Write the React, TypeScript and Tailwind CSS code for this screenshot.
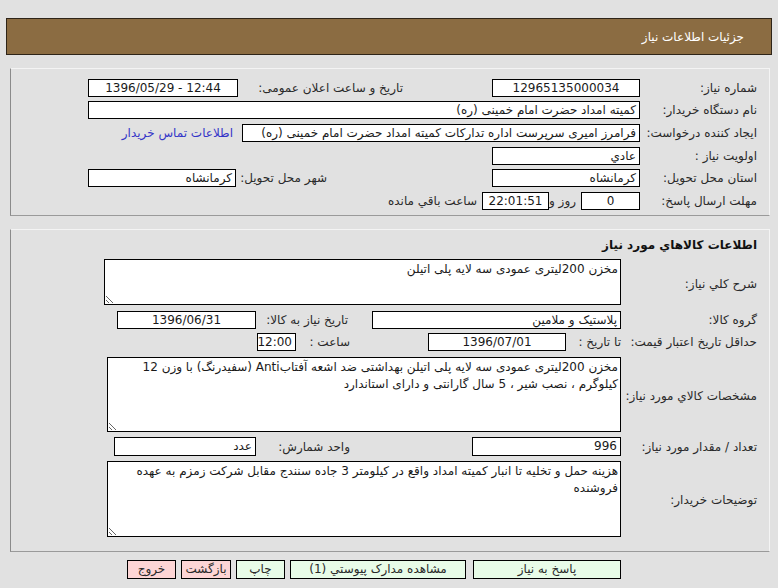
import React from "react";

type BoxProps = {
  w: string;
  center?: boolean;
  ltr?: boolean;
  children?: React.ReactNode;
};

// single-line read-only field, black frame on white
function Box({ w, center, ltr, children }: BoxProps) {
  return (
    <div
      dir={ltr ? "ltr" : undefined}
      className={`${w} h-full shrink-0 border border-black bg-white px-[3px] leading-[16px] text-[#1a1a1a] whitespace-nowrap overflow-hidden ${
        center ? "text-center" : "text-right"
      }`}
    >
      {children}
    </div>
  );
}

function Area({ w, h, value }: { w: string; h: string; value: string }) {
  return (
    <textarea
      readOnly
      value={value}
      className={`${w} ${h} shrink-0 border border-black bg-white px-[2px] pt-[1px] pb-0 text-[12px] leading-[17px] text-[#1a1a1a] font-['DejaVu_Sans',sans-serif] outline-none`}
    />
  );
}

export default function App() {
  const specs =
    "مخزن 200لیتری عمودی سه لایه پلی اتیلن بهداشتی ضد اشعه آفتابAnti (سفیدرنگ) با وزن 12\nکیلوگرم ، نصب شیر ، 5 سال گارانتی و دارای استاندارد";
  const notes =
    "هزینه حمل و تخلیه تا انبار کمیته امداد واقع در کیلومتر 3 جاده سنندج مقابل شرکت زمزم به عهده\nفروشنده";

  return (
    <div
      dir="rtl"
      className="w-[778px] h-[588px] overflow-hidden bg-[#e1e1e1] pt-[18px] text-[12px] text-[#2a2a2a] font-['DejaVu_Sans',sans-serif]"
    >
      {/* header bar */}
      <div className="mx-[6px] h-[37px] border border-[#2e2418] bg-[#8b6c42] flex items-center pr-[27px] text-white text-[12px]">
        جزئیات اطلاعات نیاز
      </div>

      {/* request info */}
      <div className="mt-[13px] mr-[8px] ml-[10px] h-[148px] border border-t-[#f4f4f4] border-r-[#f4f4f4] border-l-[#8a8a8a] border-b-[#9a9a9a] pt-[10px]">
        <div className="flex items-center h-[18px]">
          <div className="w-[129px] shrink-0 pr-[12px]">شماره نیاز:</div>
          <Box w="w-[148px]" center>12965135000034</Box>
          <div className="w-[254px] shrink-0 pr-[89px]">تاریخ و ساعت اعلان عمومی:</div>
          <Box w="w-[150px]" center ltr>1396/05/29 - 12:44</Box>
        </div>
        <div className="flex items-center h-[18px] mt-[4px]">
          <div className="w-[129px] shrink-0 pr-[12px]">نام دستگاه خریدار:</div>
          <Box w="w-[552px]">کمیته امداد حضرت امام خمینی (ره)</Box>
        </div>
        <div className="flex items-center h-[18px] mt-[5px]">
          <div className="w-[129px] shrink-0 pr-[12px] whitespace-nowrap">ایجاد کننده درخواست:</div>
          <Box w="w-[398px]">فرامرز امیری سرپرست اداره تدارکات کمیته امداد حضرت امام خمینی (ره)</Box>
          <a className="mr-[9px] text-[#3535c8] whitespace-nowrap cursor-pointer">اطلاعات تماس خریدار</a>
        </div>
        <div className="flex items-center h-[18px] mt-[5px]">
          <div className="w-[129px] shrink-0 pr-[12px]">اولویت نیاز :</div>
          <Box w="w-[148px]">عادي</Box>
        </div>
        <div className="flex items-center h-[18px] mt-[4px]">
          <div className="w-[129px] shrink-0 pr-[12px]">استان محل تحویل:</div>
          <Box w="w-[148px]">کرمانشاه</Box>
          <div className="w-[256px] shrink-0 pr-[165px] whitespace-nowrap">شهر محل تحویل:</div>
          <Box w="w-[148px]">کرمانشاه</Box>
        </div>
        <div className="flex items-center h-[18px] mt-[5px]">
          <div className="w-[129px] shrink-0 pr-[12px]">مهلت ارسال پاسخ:</div>
          <Box w="w-[59px]" center>0</Box>
          <div className="w-[32px] shrink-0 pr-[5px] whitespace-nowrap">روز و</div>
          <Box w="w-[67px]" center>22:01:51</Box>
          <div className="mr-[5px] whitespace-nowrap">ساعت باقي مانده</div>
        </div>
      </div>

      {/* goods info */}
      <div className="mt-[13px] mr-[8px] ml-[10px] h-[323px] border border-t-[#f4f4f4] border-r-[#f4f4f4] border-l-[#8a8a8a] border-b-[#9a9a9a] pt-[7px]">
        <div className="h-[16px] pr-[12px] font-bold text-[#111] leading-[16px]">
          اطلاعات کالاهاي مورد نیاز
        </div>
        <div className="flex items-center mt-[6px]">
          <div className="w-[148px] shrink-0 pr-[12px] pt-[4px]">شرح کلي نیاز:</div>
          <Area w="w-[517px]" h="h-[46px]" value="مخزن 200لیتری عمودی سه لایه پلی اتیلن" />
        </div>
        <div className="flex items-center h-[18px] mt-[6px]">
          <div className="w-[148px] shrink-0 pr-[12px]">گروه کالا:</div>
          <Box w="w-[249px]">پلاستیک و ملامین</Box>
          <div className="w-[116px] shrink-0 pr-[24px] whitespace-nowrap">تاریخ نیاز به کالا:</div>
          <Box w="w-[139px]" center>1396/06/31</Box>
        </div>
        <div className="flex items-center h-[18px] mt-[4px]">
          <div className="w-[148px] shrink-0 pr-[12px] whitespace-nowrap">حداقل تاریخ اعتبار قیمت:</div>
          <div className="w-[55px] shrink-0 whitespace-nowrap">تا تاریخ :</div>
          <Box w="w-[138px]" center>1396/07/01</Box>
          <div className="w-[132px] shrink-0 pr-[78px] whitespace-nowrap">ساعت :</div>
          <Box w="w-[39px]" center>12:00</Box>
        </div>
        <div className="flex items-center mt-[6px]">
          <div className="w-[148px] shrink-0 pr-[12px] pt-[2px] whitespace-nowrap">مشخصات کالاي مورد نیاز:</div>
          <Area w="w-[514px]" h="h-[75px]" value={specs} />
        </div>
        <div className="flex items-center h-[19px] mt-[5px]">
          <div className="w-[148px] shrink-0 pr-[12px] whitespace-nowrap">تعداد / مقدار مورد نیاز:</div>
          <Box w="w-[149px]">996</Box>
          <div className="w-[216px] shrink-0 pr-[122px] whitespace-nowrap">واحد شمارش:</div>
          <Box w="w-[142px]">عدد</Box>
        </div>
        <div className="flex items-center mt-[5px]">
          <div className="w-[148px] shrink-0 pr-[12px] pt-[2px]">توضیحات خریدار:</div>
          <Area w="w-[514px]" h="h-[76px]" value={notes} />
        </div>
      </div>

      {/* actions */}
      <div className="flex h-[19px] mt-[8px] pr-[157px] text-[12px]">
        <button className="w-[148px] h-full border border-black bg-[#e8fce8] leading-[17px]">پاسخ به نیاز</button>
        <button className="w-[176px] h-full mr-[7px] border border-black bg-[#e8fce8] leading-[17px]">مشاهده مدارک پیوستي (1)</button>
        <button className="w-[49px] h-full mr-[5px] border border-black bg-[#e8fce8] leading-[17px]">چاپ</button>
        <button className="w-[50px] h-full mr-[5px] border border-black bg-[#fdd5d5] leading-[17px]">بازگشت</button>
        <button className="w-[49px] h-full mr-[5px] border border-black bg-[#fdd5d5] leading-[17px]">خروج</button>
      </div>
    </div>
  );
}
